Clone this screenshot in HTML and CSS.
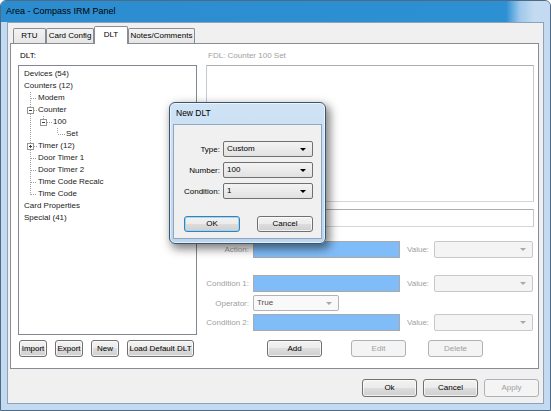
FILE: index.html
```html
<!DOCTYPE html>
<html lang="en">
<head>
    <meta charset="UTF-8">
    <title>Area - Compass IRM Panel</title>
    <link rel="stylesheet" href="styles.css">
</head>
<body>
    <div class="window">
        <div class="titlebar">Area - Compass IRM Panel</div>
        <div class="client">
            <div class="tabs">
                <div class="tab tab-rtu">RTU</div>
                <div class="tab tab-card">Card Config</div>
                <div class="tab tab-dlt active">DLT</div>
                <div class="tab tab-notes">Notes/Comments</div>
            </div>
            <div class="tab-panel">
                <div class="col-left">
                    <div class="caption">DLT:</div>
                    <div class="tree">
                        <!-- connector lines and expander boxes -->
                        <svg class="tree-lines" width="177" height="268">
                            <path d="M11.5 26V129 M12 32.5H18 M15 44.5H18 M15 80.5H18 M12 92.5H18 M12 104.5H18 M12 116.5H18 M12 128.5H18 M24.5 50V53 M28 56.5H33 M38.5 62V68 M39 68.5H46" stroke="#a0a0a0" stroke-dasharray="1 1" fill="none"/>
                            <g stroke="#969696" fill="#fff">
                                <rect x="8.5" y="41.5" width="6" height="6"/>
                                <rect x="8.5" y="77.5" width="6" height="6"/>
                                <rect x="21.5" y="53.5" width="6" height="6"/>
                            </g>
                            <path d="M10 44.5H13 M10 80.5H13 M11.5 79V82 M23 56.5H26" stroke="#3a3a3a"/>
                        </svg>
                        <div class="node d0">Devices (54)</div>
                        <div class="node d0">Counters (12)</div>
                        <div class="node d1">Modem</div>
                        <div class="node d1">Counter</div>
                        <div class="node d2">100</div>
                        <div class="node d3">Set</div>
                        <div class="node d1">Timer (12)</div>
                        <div class="node d1">Door Timer 1</div>
                        <div class="node d1">Door Timer 2</div>
                        <div class="node d1">Time Code Recalc</div>
                        <div class="node d1">Time Code</div>
                        <div class="node d0">Card Properties</div>
                        <div class="node d0">Special (41)</div>
                    </div>
                    <div class="btn-row left-buttons">
                        <div class="btn w28">Import</div>
                        <div class="btn w28">Export</div>
                        <div class="btn w28">New</div>
                        <div class="btn w67">Load Default DLT</div>
                    </div>
                </div>
                <div class="col-right">
                    <div class="caption muted">FDL: Counter 100 Set</div>
                    <div class="textbox big"></div>
                    <div class="textbox line"></div>
                    <div class="form-row row-action">
                        <span class="lbl">Action:</span>
                        <span class="field"></span>
                        <span class="value-lbl">Value:</span>
                        <span class="combo off value-combo"></span>
                    </div>
                    <div class="form-row row-cond1">
                        <span class="lbl">Condition 1:</span>
                        <span class="field"></span>
                        <span class="value-lbl">Value:</span>
                        <span class="combo off value-combo"></span>
                    </div>
                    <div class="form-row row-op">
                        <span class="lbl">Operator:</span>
                        <span class="combo op-combo">True</span>
                    </div>
                    <div class="form-row row-cond2">
                        <span class="lbl">Condition 2:</span>
                        <span class="field"></span>
                        <span class="value-lbl">Value:</span>
                        <span class="combo off value-combo"></span>
                    </div>
                    <div class="btn-row right-buttons">
                        <div class="btn w55 add">Add</div>
                        <div class="btn w55 disabled edit">Edit</div>
                        <div class="btn w55 disabled delete">Delete</div>
                    </div>
                </div>
            </div>
            <div class="footer">
                <div class="btn w55 tall">Ok</div>
                <div class="btn w55 tall">Cancel</div>
                <div class="btn w55 tall disabled">Apply</div>
            </div>
        </div>

        <div class="dialog">
            <div class="dialog-title">New DLT</div>
            <div class="dialog-body">
                <div class="dialog-form">
                    <label>Type:</label>
                    <span class="combo dark">Custom</span>
                    <label>Number:</label>
                    <span class="combo dark">100</span>
                    <label>Condition:</label>
                    <span class="combo dark">1</span>
                </div>
                <div class="dialog-buttons">
                    <div class="btn w56 focused">OK</div>
                    <div class="btn w56">Cancel</div>
                </div>
            </div>
        </div>
    </div>
</body>
</html>
```

FILE: styles.css
```css
body {
    margin: 0;
    font-family: "Liberation Sans", Arial, sans-serif;
    font-size: 8px;
    color: #000;
    background: #fff;
}
.window {
    position: relative;
    width: 551px;
    height: 411px;
    box-sizing: border-box;
    border: 1px solid #4f6a85;
    border-radius: 6px 6px 0 0;
    background: #c3daf0;
    display: flex;
    flex-direction: column;
    overflow: hidden;
}
.titlebar {
    height: 21px;
    line-height: 20px;
    padding-left: 5px;
    font-size: 9px;
    background: linear-gradient(to right, #2b8dd0 0%, #2d90d3 92%, #9ec8ec 94.5%, #c3daf0 97%);
}
.client {
    flex: 1;
    margin: 0 6px 6px;
    border: 1px solid #8ea3b8;
    background: #f0f0f0;
    display: flex;
    flex-direction: column;
}

/* tabs */
.tabs {
    display: flex;
    align-items: flex-end;
    height: 17px;
    margin: 3px 4px 0 2px;
    padding-left: 3px;
    position: relative;
    z-index: 1;
}
.tab {
    box-sizing: border-box;
    height: 15px;
    line-height: 14px;
    text-align: center;
    border: 1px solid #898c95;
    border-bottom: 0;
    border-radius: 2px 2px 0 0;
    background: linear-gradient(#f3f3f3, #e6e6e6);
}
.tab.active {
    height: 18px;
    line-height: 15px;
    margin-bottom: -1px;
    background: #fff;
}
.tab-rtu { width: 33px; }
.tab-card { width: 48px; }
.tab-dlt { width: 34px; }
.tab-notes { width: 67px; }

.tab-panel {
    margin: 0 4px 0 2px;
    border: 1px solid #898c95;
    background: #fff;
    display: flex;
    gap: 9px;
    padding: 6px 4px 11px 7px;
}
.caption {
    height: 12px;
    line-height: 12px;
    margin-bottom: 3px;
    padding-left: 2px;
}
.muted {
    color: #a0a0a0;
}

/* left column: tree */
.col-left {
    width: 179px;
    display: flex;
    flex-direction: column;
}
.tree {
    flex: 1;
    position: relative;
    border: 1px solid #828790;
    background: #fff;
    padding-top: 2px;
}
.tree-lines {
    position: absolute;
    left: 0;
    top: 0;
}
.node {
    position: relative;
    height: 12px;
    line-height: 12px;
    color: #1a1a1a;
}
.d0 { padding-left: 5px; }
.d1 { padding-left: 19px; }
.d2 { padding-left: 34px; }
.d3 { padding-left: 47px; }

/* buttons */
.btn-row {
    display: flex;
    height: 17px;
    margin-top: 5px;
}
.left-buttons {
    gap: 8px;
    padding-left: 1px;
}
.btn {
    box-sizing: border-box;
    height: 17px;
    line-height: 15px;
    text-align: center;
    white-space: nowrap;
    border: 1px solid #707070;
    border-radius: 3px;
    background: linear-gradient(#f2f2f2 0%, #ebebeb 50%, #dddddd 50%, #cfcfcf 100%);
    box-shadow: inset 0 0 0 1px rgba(255, 255, 255, 0.7);
}
.btn.tall {
    height: 18px;
    line-height: 16px;
}
.btn.disabled {
    color: #a0a0a0;
    border-color: #adb2b5;
    background: #f4f4f4;
    box-shadow: none;
}
.btn.focused {
    border-color: #3c7fb1;
    box-shadow: inset 0 0 0 1px #9fd5f5;
}
.w28 { width: 28px; }
.w55 { width: 55px; }
.w56 { width: 56px; }
.w67 { width: 67px; }

/* right column: edit form */
.col-right {
    width: 328px;
    display: flex;
    flex-direction: column;
}
.textbox {
    box-sizing: border-box;
    border: 1px solid #abadb3;
    border-color: #abadb3 #c6c9cf #d3d7dd #c6c9cf;
    background: #fff;
}
.textbox.big {
    height: 137px;
}
.textbox.line {
    height: 18px;
    margin-top: 7px;
}
.form-row {
    display: flex;
    align-items: center;
    height: 17px;
}
.row-action { margin-top: 14px; }
.row-cond1 { margin-top: 17px; }
.row-op { margin-top: 3px; height: 16px; }
.row-cond2 { margin-top: 3px; }
.lbl {
    width: 47px;
    box-sizing: border-box;
    padding-right: 4px;
    text-align: right;
    color: #a0a0a0;
    white-space: nowrap;
}
.field {
    width: 147px;
    height: 17px;
    box-sizing: border-box;
    border: 1px solid #a9a9a9;
    background: #80bdf8;
}
.value-lbl {
    width: 34px;
    box-sizing: border-box;
    padding-left: 7px;
    color: #a0a0a0;
}
.combo {
    position: relative;
    display: block;
    box-sizing: border-box;
    height: 17px;
    line-height: 15px;
    padding-left: 3px;
    border: 1px solid #c8c8c8;
    border-radius: 2px;
    background: #f4f4f4;
}
.combo::after {
    content: "";
    position: absolute;
    right: 6px;
    top: 6px;
    border-left: 3px solid transparent;
    border-right: 3px solid transparent;
    border-top: 3px solid #a8a8a8;
}
.value-combo {
    width: 99px;
}
.op-combo {
    width: 86px;
    height: 16px;
    line-height: 14px;
    color: #505050;
    border-color: #b4b4b4;
    background: #f9f9f9;
}
.right-buttons {
    margin-top: 9px;
    padding-left: 61px;
}
.right-buttons .edit { margin-left: 29px; }
.right-buttons .delete { margin-left: 22px; }

.footer {
    display: flex;
    justify-content: flex-end;
    gap: 6px;
    margin: 10px 4px 0 0;
}

/* New DLT popup */
.dialog {
    position: absolute;
    left: 168px;
    top: 101px;
    width: 157px;
    height: 142px;
    box-sizing: border-box;
    padding: 0 3px 4px;
    border: 1px solid #3b5470;
    border-radius: 6px;
    background: linear-gradient(#cfe3f5, #bcd6ee);
    box-shadow: inset 0 0 0 1px rgba(255, 255, 255, 0.6), 3px 4px 10px 1px rgba(0, 0, 0, 0.5);
    display: flex;
    flex-direction: column;
}
.dialog-title {
    height: 21px;
    line-height: 21px;
    padding-left: 3px;
    font-size: 8.5px;
}
.dialog-body {
    flex: 1;
    border: 1px solid #8ea6bf;
    background: #f0f0f0;
}
.dialog-form {
    display: grid;
    grid-template-columns: 46px 90px;
    grid-auto-rows: 16px;
    column-gap: 3px;
    row-gap: 5px;
    align-items: center;
    padding-top: 16px;
}
.dialog-form label {
    text-align: right;
}
.combo.dark {
    height: 16px;
    line-height: 14px;
    border-color: #707070;
    background: linear-gradient(#f3f3f3, #e2e2e2);
}
.combo.dark::after {
    border-top-color: #000;
    top: 6px;
}
.dialog-buttons {
    display: flex;
    gap: 17px;
    margin-top: 17px;
    padding-left: 10px;
}
.dialog-buttons .btn {
    height: 16px;
    line-height: 14px;
}
```
